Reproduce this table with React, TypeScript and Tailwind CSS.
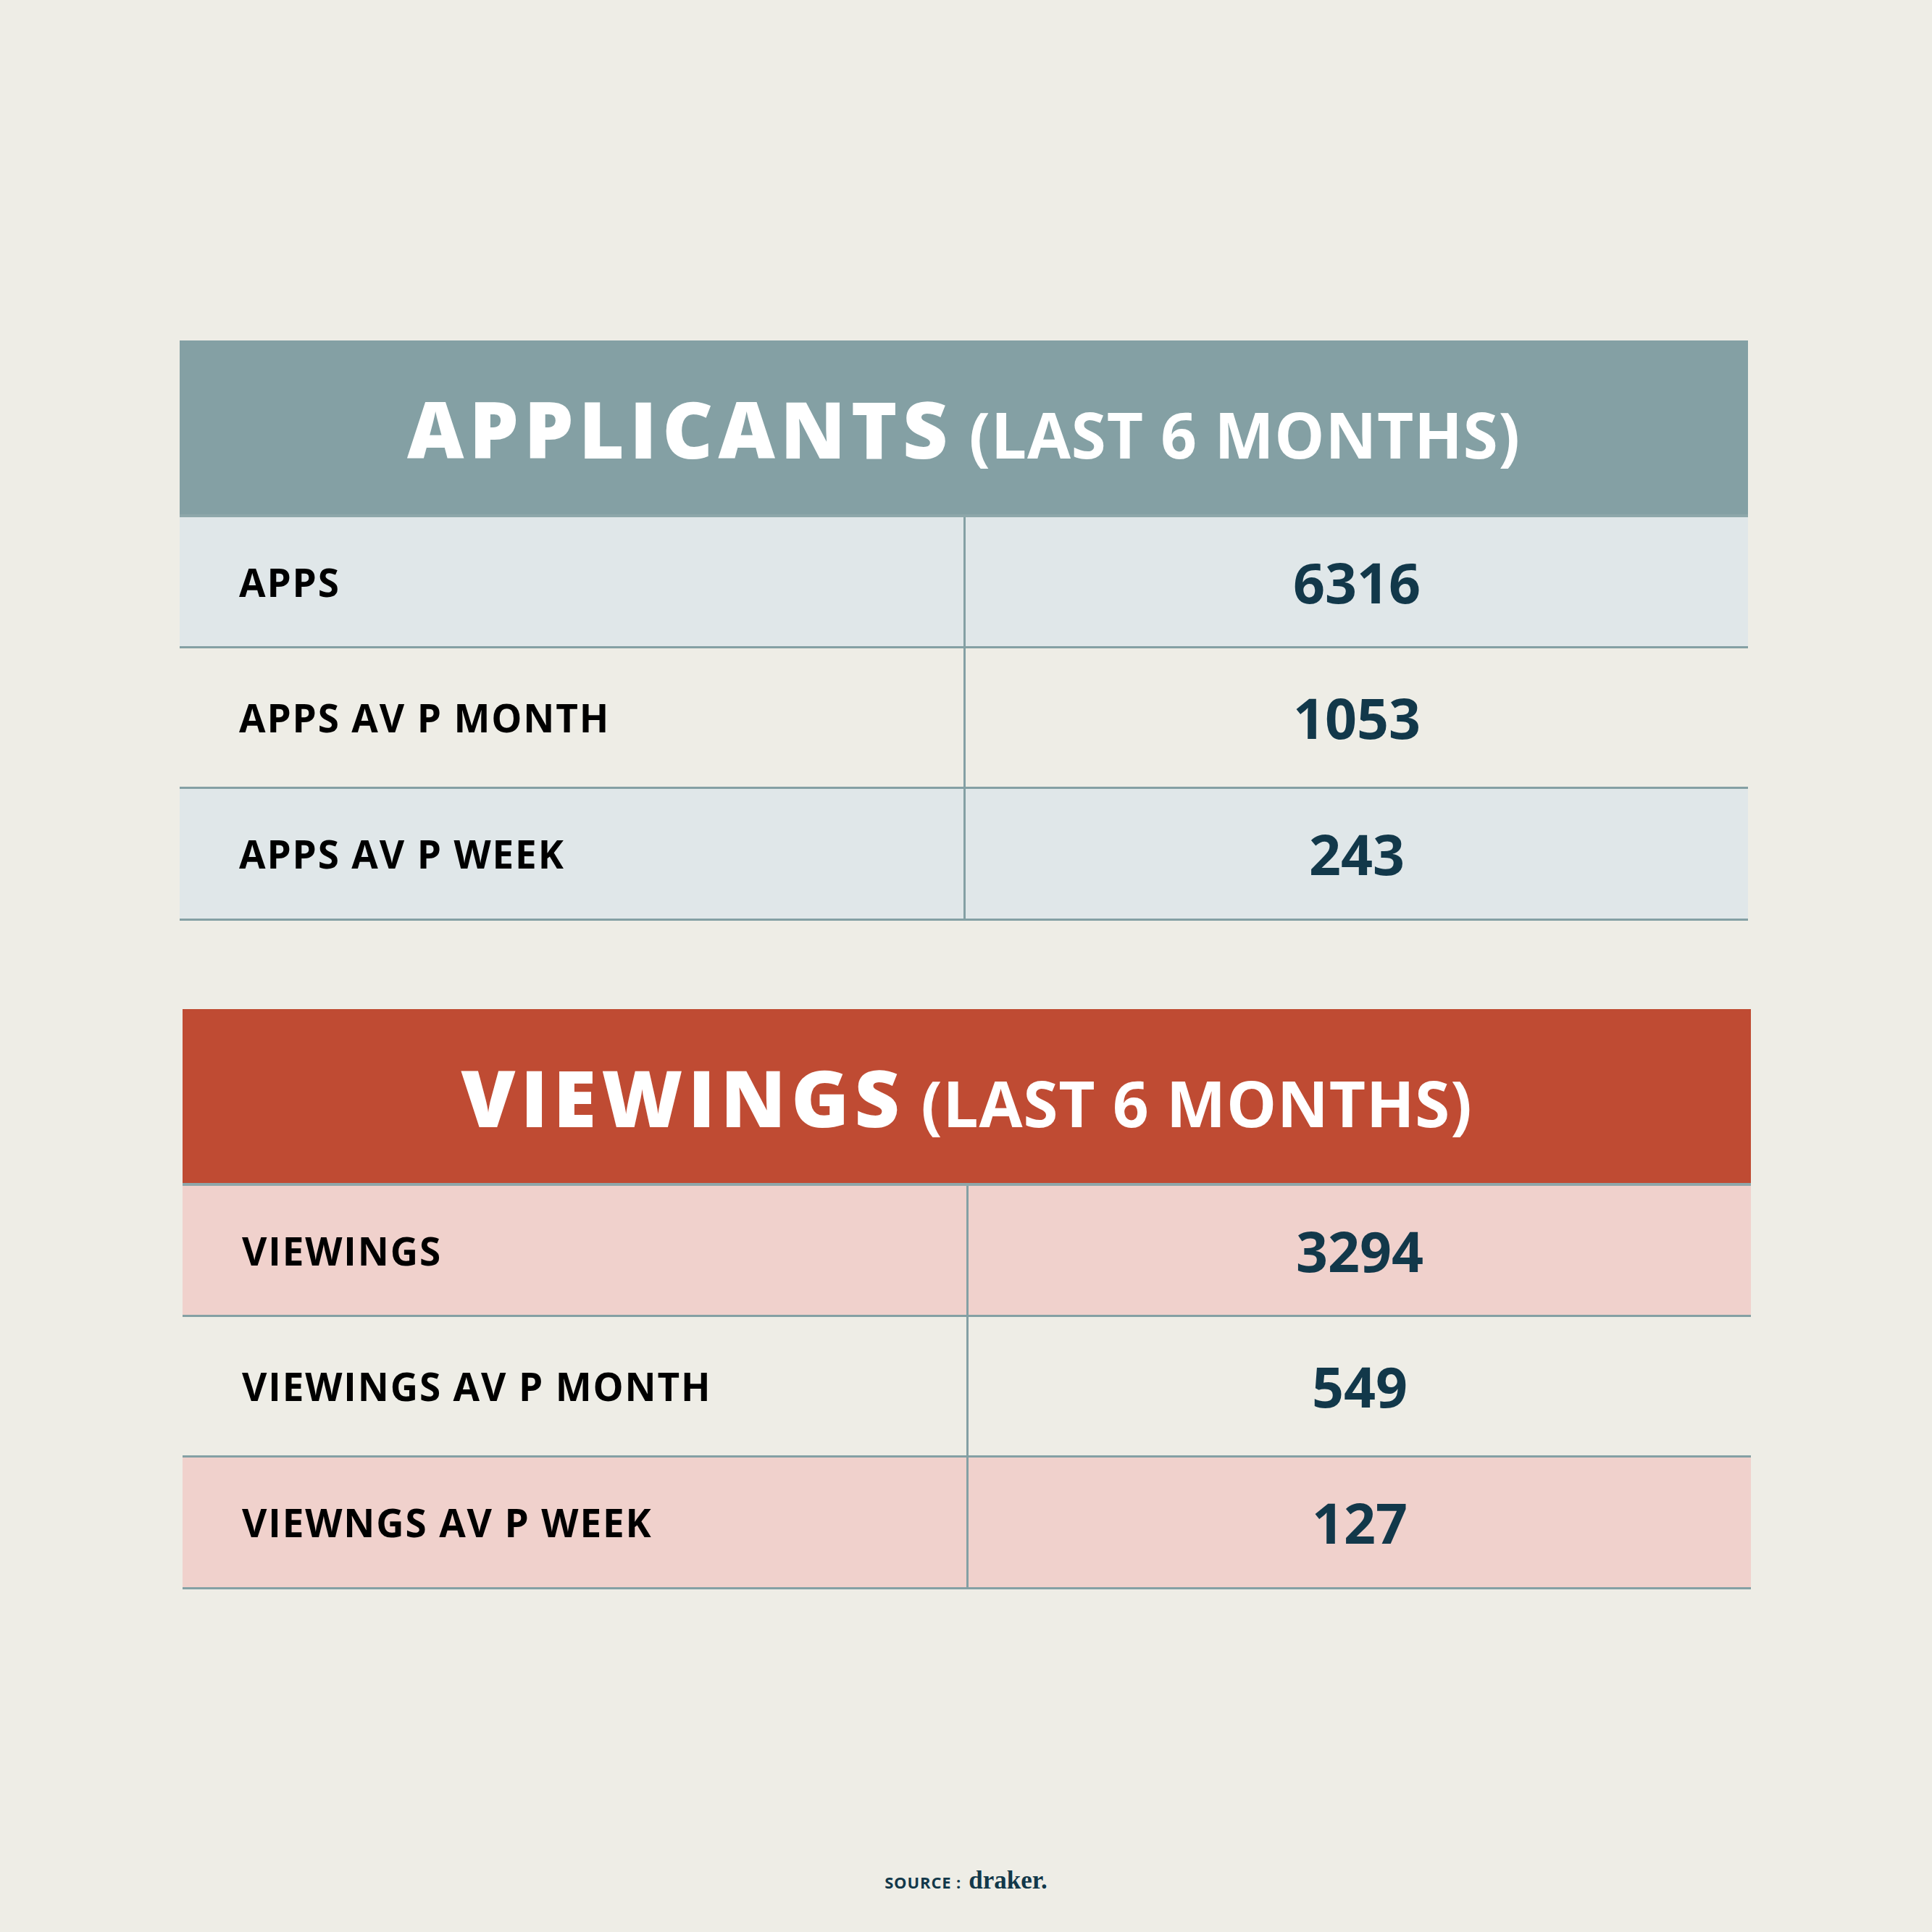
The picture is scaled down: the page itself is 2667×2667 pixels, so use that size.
import React from "react";

type Row = { label: string; value: string; h: string; tinted: boolean };

const rows1: Row[] = [
  { label: "APPS", value: "6316", h: "h-[178px]", tinted: true },
  { label: "APPS AV P MONTH", value: "1053", h: "h-[191px]", tinted: false },
  { label: "APPS AV P WEEK", value: "243", h: "h-[179px]", tinted: true },
];

const rows2: Row[] = [
  { label: "VIEWINGS", value: "3294", h: "h-[178px]", tinted: true },
  { label: "VIEWINGS AV P MONTH", value: "549", h: "h-[191px]", tinted: false },
  { label: "VIEWNGS AV P WEEK", value: "127", h: "h-[179px]", tinted: true },
];

function Table({
  title,
  headerBg,
  tint,
  rows,
  className,
}: {
  title: string;
  headerBg: string;
  tint: string;
  rows: Row[];
  className: string;
}) {
  return (
    <div className={"w-[2165px] flex flex-col " + className}>
      <div className={"h-[240px] flex items-center justify-center text-white " + headerBg}>
        <div className="flex items-baseline gap-[22px] pt-[4px]">
          <span className="font-['Open_Sans',sans-serif] font-extrabold text-[108px] leading-none tracking-[0.068em]">
            {title}
          </span>
          <span className="font-['Open_Sans',sans-serif] font-bold text-[87px] leading-none tracking-[0.01em]">
            (LAST 6 MONTHS)
          </span>
        </div>
      </div>
      <div className="h-[4px] bg-[#8ea7aa]" />
      {rows.map((r) => (
        <div key={r.label} className="flex flex-col">
          <div className={"flex " + r.h + " " + (r.tinted ? tint : "")}>
            <div className="w-[1082px] flex items-center pl-[82px]">
              <span className="font-['Open_Sans',sans-serif] font-bold text-[53px] leading-none text-black tracking-[0.035em]">
                {r.label}
              </span>
            </div>
            <div className="w-[3px] bg-[#84a0a4]" />
            <div className="flex-1 flex items-center justify-center">
              <span className="font-['Open_Sans',sans-serif] font-bold text-[77px] leading-none text-[#12384a]">
                {r.value}
              </span>
            </div>
          </div>
          <div className="h-[3px] bg-[#84a0a4]" />
        </div>
      ))}
    </div>
  );
}

export default function App() {
  return (
    <div className="w-[2667px] h-[2667px] bg-[#eeede6] flex flex-col">
      <div className="pt-[470px] flex flex-col">
        <Table
          title="APPLICANTS"
          headerBg="bg-[#84a0a4]"
          tint="bg-[#e0e7e9]"
          rows={rows1}
          className="ml-[248px]"
        />
        <Table
          title="VIEWINGS"
          headerBg="bg-[#bf4b33]"
          tint="bg-[#f0d1cc]"
          rows={rows2}
          className="ml-[252px] mt-[122px]"
        />
      </div>
      <div className="mt-[384px] flex items-baseline justify-center gap-[10px] text-[#12384a]">
        <span className="font-['Open_Sans',sans-serif] font-bold text-[22px] tracking-[0.04em] leading-none">
          SOURCE :
        </span>
        <span className="font-['Liberation_Serif',serif] font-bold text-[35px] leading-none">
          draker.
        </span>
      </div>
    </div>
  );
}
